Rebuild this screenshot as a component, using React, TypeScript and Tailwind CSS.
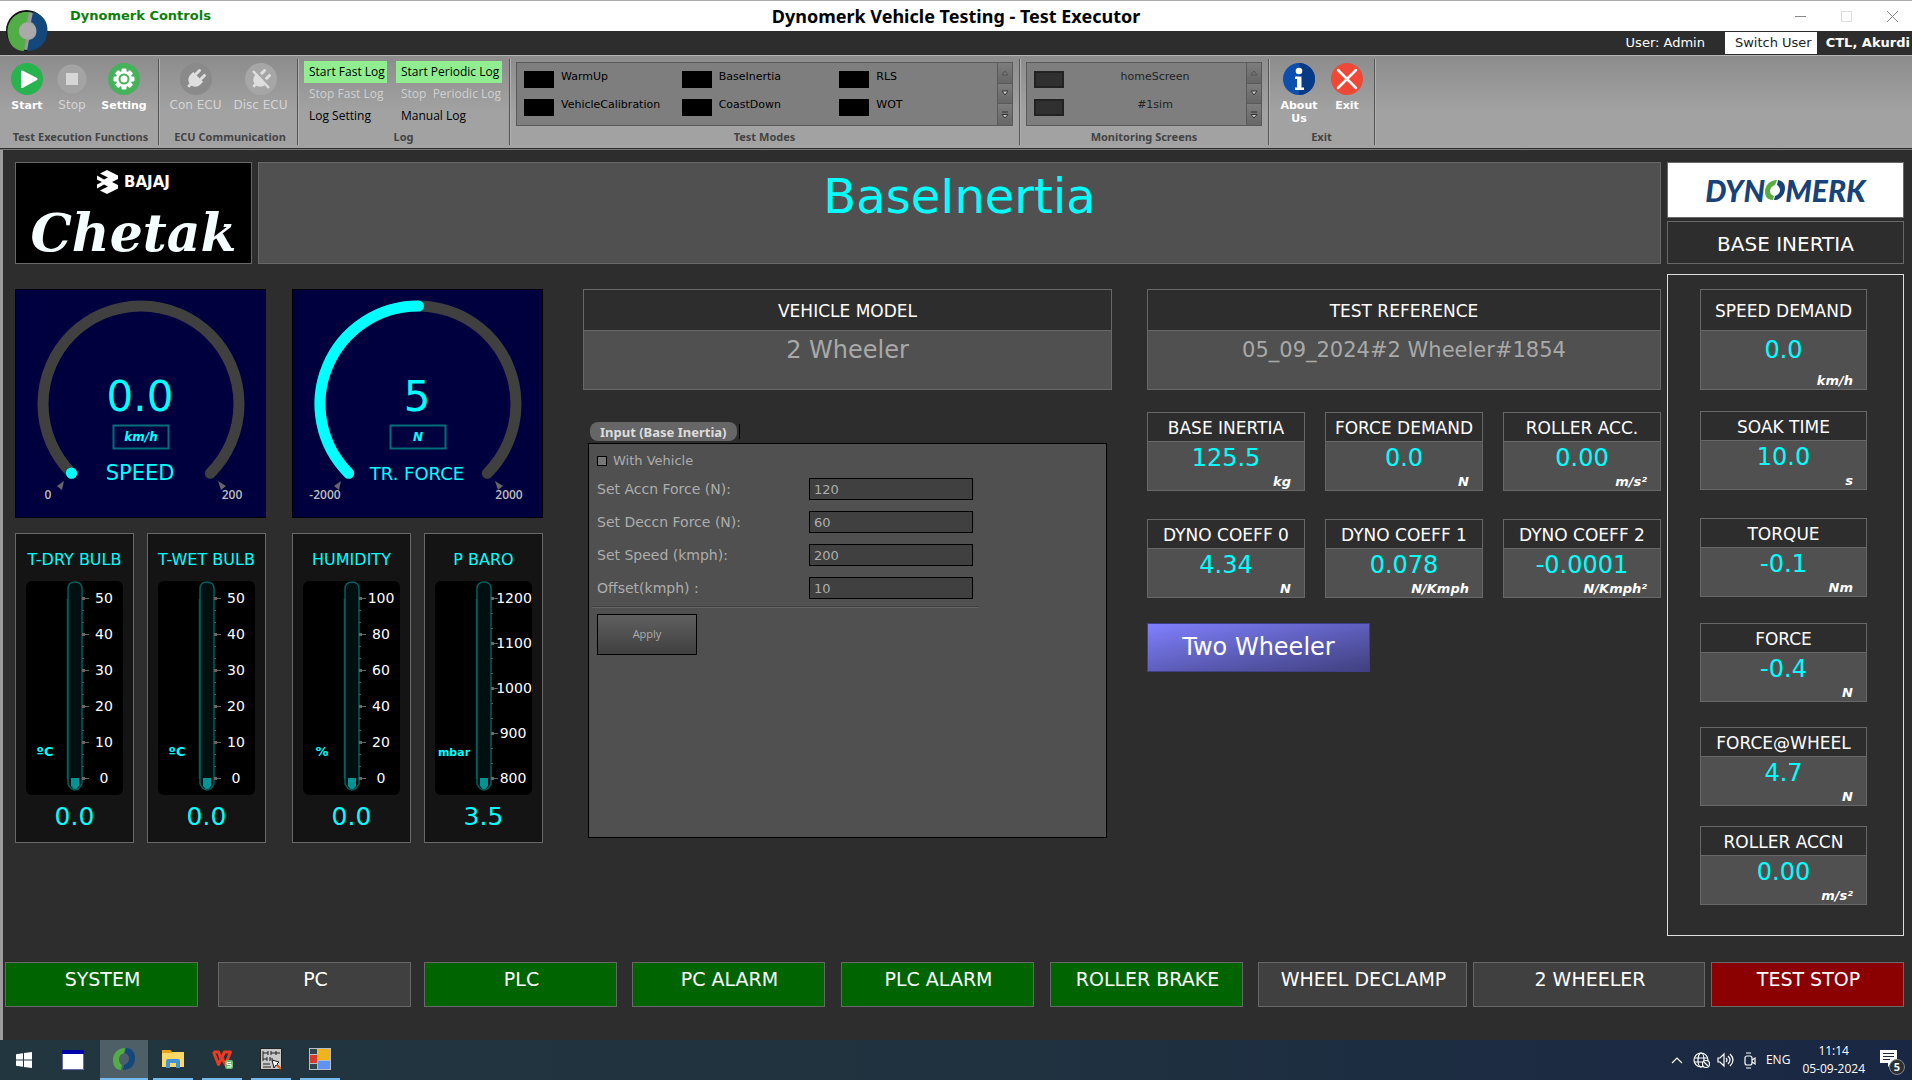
import React from "react";

const LINE = "border-[#686868]";

/* ---------- title bar and ribbon ---------- */

function BrandMark({ className }: { className?: string }) {
  return (
    <svg viewBox="0 0 42 42" className={className} aria-hidden="true">
      <circle cx="20.500" cy="20.500" r="20.500" fill="#111" />
      <circle cx="21" cy="21" r="19" fill="#9a9a9a" />
      <path d="M23 2 C10 1 1 10 1.500 23 C2 34 9 41 18 41 L20 29 C15 28 13 25 13 21 C13 16 16 13 21 12 Z" fill="#52ad47" />
      <path d="M27 2 C36 4 42 11 41.500 21 C41 33 33 41 21 41 L23 30 C28 29 30.500 26 30.500 21 C30.500 17 28 13 25 12 Z" fill="#14477c" />
      <circle cx="21.500" cy="21" r="8.500" fill="#aaaaaa" />
    </svg>
  );
}

function RibbonGroup({ label, className, children }: { label: string; className: string; children: React.ReactNode }) {
  return (
    <section className={`my-[3px] flex flex-col border-r border-[#555] shadow-[1px_0_0_#b0b0b0] ${className}`}>
      <div className="flex h-[71px] min-w-0">{children}</div>
      <h2 className="text-center font-['Noto_Sans',sans-serif] text-[11px] leading-4 font-bold text-[#444]">{label}</h2>
    </section>
  );
}

function RibbonButton({ label, className, muted, children }: { label: React.ReactNode; className?: string; muted?: boolean; children: React.ReactNode }) {
  return (
    <button
      className={`flex flex-col items-center gap-1 pt-1 leading-[13px] whitespace-nowrap ${muted ? "text-[12px] text-[#d4d4d4]" : "text-[11px] font-bold text-white"} ${className ?? ""}`}
    >
      <svg viewBox="0 0 32 32" className="h-8 w-8" aria-hidden="true">
        {children}
      </svg>
      <span>{label}</span>
    </button>
  );
}

const PLUG = (
  <g transform="rotate(45 16 16)" fill="#dedede">
    <path d="M9 13h14v4a7 7 0 0 1-14 0z" />
    <rect x="11" y="6" width="3" height="8" rx="1.500" />
    <rect x="18" y="6" width="3" height="8" rx="1.500" />
    <rect x="14.500" y="22" width="3" height="5" />
  </g>
);

function ScrollButtons({ name }: { name: string }) {
  return (
    <div className="grid w-[15px] shrink-0 grid-rows-3 border-l border-[#5a5a5a]">
      {["up", "down", "more"].map((kind) => (
        <button key={kind} aria-label={`${name} ${kind}`} className="flex items-center justify-center border-b border-[#5a5a5a] bg-gradient-to-b from-[#7d7d7d] to-[#666] last:border-b-0">
          <svg viewBox="0 0 8 8" className="h-2 w-2" aria-hidden="true">
            {kind === "up" && <path d="M1 6h6L4 2z" fill="#777" stroke="#555" />}
            {kind === "down" && <path d="M1 2h6L4 6z" fill="#ccc" stroke="#333" />}
            {kind === "more" && <path d="M1 1h6M1 3.500h6L4 7z" fill="#ccc" stroke="#333" />}
          </svg>
        </button>
      ))}
    </div>
  );
}

const LOG_FONT = "font-['Open_Sans',sans-serif] text-[12px] h-[22px] px-[5px] text-left whitespace-pre";

function Ribbon() {
  return (
    <div className="flex h-[93px] border-t border-[#b5b5b5] bg-gradient-to-b from-[#8c8c8c] to-[#a2a2a2] to-60% pl-[3px]">
      <RibbonGroup label="Test Execution Functions" className="w-[156px]">
        <RibbonButton label="Start" className="w-[48px]">
          <circle cx="16" cy="16" r="16" fill="#27b44f" />
          <path d="M11 8.500L25.500 16L11 24z" fill="#fff" stroke="#fff" strokeWidth="2" strokeLinejoin="round" />
        </RibbonButton>
        <RibbonButton label="Stop" muted className="w-[42px]">
          <circle cx="16" cy="16" r="14.500" fill="#a3a3a3" />
          <rect x="10" y="10" width="12" height="12" fill="#d6d6d6" />
        </RibbonButton>
        <RibbonButton label="Setting" className="w-[62px]">
          <circle cx="16" cy="16" r="16" fill="#44b35b" />
          {[0, 45, 90, 135].map((a) => (
            <rect key={a} x="13.500" y="5.500" width="5" height="21" rx="1" fill="#fff" transform={`rotate(${a} 16 16)`} />
          ))}
          <circle cx="16" cy="16" r="8" fill="#fff" />
          <circle cx="16" cy="16" r="4.500" fill="none" stroke="#44b35b" strokeWidth="2" />
        </RibbonButton>
      </RibbonGroup>
      <RibbonGroup label="ECU Communication" className="w-[139px] pl-1">
        <RibbonButton label="Con ECU" muted className="w-[65px]">
          <circle cx="16" cy="16" r="16" fill="#8a8a8a" />
          {PLUG}
        </RibbonButton>
        <RibbonButton label="Disc ECU" muted className="w-[65px]">
          <circle cx="16" cy="16" r="16" fill="#a6a6a6" />
          {PLUG}
          <path d="M10 7L26 24" stroke="#a6a6a6" strokeWidth="3" />
          <path d="M8 8L24 25" stroke="#dedede" strokeWidth="2.500" />
        </RibbonButton>
      </RibbonGroup>
      <RibbonGroup label="Log" className="w-[212px]">
        <div className="grid grid-cols-[83px_106px] content-start gap-x-[9px] pt-[2px] pl-[6px] text-black">
          <button className={`bg-[#90ee90] ${LOG_FONT}`}>Start Fast Log</button>
          <button className={`bg-[#90ee90] ${LOG_FONT}`}>Start Periodic Log</button>
          <button className={`text-[#d0d0d0] ${LOG_FONT}`}>Stop Fast Log</button>
          <button className={`text-[#d0d0d0] ${LOG_FONT}`}>Stop  Periodic Log</button>
          <button className={LOG_FONT}>Log Setting</button>
          <button className={LOG_FONT}>Manual Log</button>
        </div>
      </RibbonGroup>
      <RibbonGroup label="Test Modes" className="w-[510px]">
        <div className="mx-[6px] mt-[3px] flex h-16 flex-1 border border-[#5a5a5a] bg-[#7e7e7e]">
          <div className="grid flex-1 grid-cols-3 grid-rows-2 gap-y-[5px] py-[6px] pl-[7px] text-[11px] text-black">
            {["WarmUp", "BaseInertia", "RLS", "VehicleCalibration", "CoastDown", "WOT"].map((m) => (
              <button key={m} className="flex gap-[7px] text-left">
                <span className="mt-[2px] h-[17px] w-[30px] shrink-0 bg-black" />
                {m}
              </button>
            ))}
          </div>
          <ScrollButtons name="Test modes" />
        </div>
      </RibbonGroup>
      <RibbonGroup label="Monitoring Screens" className="w-[249px]">
        <div className="mx-[6px] mt-[3px] flex h-16 flex-1 border border-[#5a5a5a] bg-[#7e7e7e]">
          <div className="grid flex-1 grid-rows-2 gap-y-[5px] py-[6px] pl-[7px] text-[11px] text-[#222]">
            {["homeScreen", "#1sim"].map((m) => (
              <button key={m} className="flex">
                <span className="mt-[2px] h-[17px] w-[30px] shrink-0 border-2 border-[#222] bg-[#303030]" />
                <span className="flex-1 text-center">{m}</span>
              </button>
            ))}
          </div>
          <ScrollButtons name="Screens" />
        </div>
      </RibbonGroup>
      <RibbonGroup label="Exit" className="w-[106px] px-[4px]">
        <RibbonButton label={<>About<br />Us</>} className="w-[52px]">
          <circle cx="16" cy="16" r="16" fill="#0d4fae" />
          <path d="M16 0a16 16 0 0 1 0 32z" fill="#063a85" />
          <circle cx="16" cy="8" r="3.300" fill="#fff" />
          <path d="M12 13.500h6.500v11H21V27h-9v-2.500h2V16h-2z" fill="#fff" />
        </RibbonButton>
        <RibbonButton label="Exit" className="w-[44px]">
          <circle cx="16" cy="16" r="16" fill="#ef4836" />
          <path d="M7 7l18 18M25 7L7 25" stroke="#fff" strokeWidth="2.500" strokeLinecap="round" />
        </RibbonButton>
      </RibbonGroup>
    </div>
  );
}

function WindowHeader() {
  return (
    <header className="relative">
      <div className="grid h-[31px] grid-cols-[1fr_auto_1fr] items-center border-t border-[#aaa] bg-white">
        <span className="pl-[70px] text-[13px] leading-[18px] font-bold text-[#0a800a]">Dynomerk Controls</span>
        <h1 className="font-['Noto_Sans',sans-serif] text-[18px] leading-[26px] font-bold text-black">Dynomerk Vehicle Testing - Test Executor</h1>
        <div className="flex justify-end gap-[35px] pr-[14px]">
          {["M0 5.500H11", "M.5.500h10v10H.5z", "M0 0L11 11M11 0L0 11"].map((d, i) => (
            <button key={d} aria-label={["Minimize", "Maximize", "Close"][i]}>
              <svg viewBox="0 0 11 11" className="h-[11px] w-[11px]" aria-hidden="true">
                <path d={d} fill="none" stroke={i === 1 ? "#ddd" : "#888"} />
              </svg>
            </button>
          ))}
        </div>
      </div>
      <div className="flex h-6 items-center justify-end bg-[#2d2d2d] text-[13px] whitespace-nowrap text-white">
        <span>User: Admin</span>
        <button className="mr-[9px] ml-[20px] h-[22px] bg-white pr-[5px] pl-[10px] text-[#222]">Switch User</button>
        <span className="pr-[2px] font-bold">CTL, Akurdi</span>
      </div>
      <BrandMark className="absolute top-[10px] left-[6px] h-[42px] w-[42px]" />
    </header>
  );
}

/* ---------- instruments ---------- */

function Gauge({ value, unit, title, min, max, fill, titleSize }: { value: string; unit: string; title: string; min: string; max: string; fill: number; titleSize: number }) {
  const cx = 126;
  const cy = 115;
  const r = 98;
  const at = (f: number) => {
    const a = ((135 + 270 * f) * Math.PI) / 180;
    return `${(cx + r * Math.cos(a)).toFixed(1)} ${(cy + r * Math.sin(a)).toFixed(1)}`;
  };
  return (
    <div className="h-[229px] w-[251px] border border-black bg-[#00003f]">
      <svg viewBox="1 1 249 227" className="h-full w-full" role="img" aria-label={`${title} ${value} ${unit}`}>
        <path d={`M${at(0)} A${r} ${r} 0 1 1 ${at(1)}`} fill="none" stroke="#404040" strokeWidth="11" strokeLinecap="round" />
        <path d={`M${at(0)} A${r} ${r} 0 ${fill > 0.66 ? 1 : 0} 1 ${at(fill)}`} fill="none" stroke="#00ffff" strokeWidth="11" strokeLinecap="round" />
        <g fill="#00ffff" textAnchor="middle">
          <text x="125" y="122" fontSize="42">{value}</text>
          <text x="126" y="152" fontSize="12" fontWeight="bold" fontStyle="italic">{unit}</text>
          <text x="125" y="191" fontSize={titleSize}>{title}</text>
        </g>
        <rect x="98.500" y="136.500" width="55" height="23" fill="none" stroke="#006d78" strokeWidth="2" />
        <path d="M49 192l-7 5 5 4z" fill="#666" />
        <path d="M203 192l8 5-5 4z" fill="#666" />
        <g fill="#bdbdbd" fontSize="12" fontWeight="600" textAnchor="middle" fontFamily="Open Sans, sans-serif">
          <text x="33" y="210">{min}</text>
          <text x="217" y="210">{max}</text>
        </g>
      </svg>
    </div>
  );
}

function Thermometer({ title, unit, marks, value }: { title: string; unit: string; marks: string[]; value: string }) {
  const step = 180 / (marks.length - 1);
  return (
    <div className={`flex h-[310px] w-[119px] flex-col items-center border bg-[#141414] pt-[17px] text-[#00ffff] ${LINE}`}>
      <h3 className="text-[16px] leading-[18px] whitespace-nowrap">{title}</h3>
      <svg viewBox="0 0 97 214" className="mt-[12px] h-[214px] w-[97px]" role="img" aria-label={`${title} ${value} ${unit}`}>
        <rect width="97" height="214" rx="6" fill="#000" />
        <path d="M42 8q0-7 7-7t7 7v195q-3 6-7 6t-7-6z" fill="#000f0f" stroke="#005f5f" strokeWidth="1.500" />
        <path d="M41.500 18v180" stroke="#005f5f" strokeWidth="1.500" />
        <path d="M45 197h8v8l-2.500 3h-3l-2.500-3z" fill="#009494" />
        {marks.map((m, i) => (
          <g key={m}>
            <path d={`M56 ${17.5 + i * step}h7`} stroke="#666" />
            <path d={`M56 ${17.5 + i * step}h3`} stroke="#666" strokeWidth="3" />
            {i < marks.length - 1 && <path d={`M56 ${17.5 + (i + 1 / 3) * step}h2M56 ${17.5 + (i + 2 / 3) * step}h2`} stroke="#555" />}
            <text x={m.length > 3 ? 79 : 78} y={22 + i * step} fontSize="14" fill="#fff" textAnchor="middle">{m}</text>
          </g>
        ))}
        <text x={19} y="175" fontSize={unit.length > 2 ? 11 : 13} fontWeight="bold" fill="#00ffff" textAnchor="middle">{unit}</text>
      </svg>
      <output className="mt-[7px] text-[25px] leading-[30px]">{value}</output>
    </div>
  );
}

function Reading({ title, value, unit, tall, className }: { title: string; value: string; unit: string; tall?: boolean; className?: string }) {
  return (
    <div className={`flex flex-col border text-center whitespace-nowrap ${LINE} ${tall ? "h-[101px]" : "h-[79px]"} ${className ?? ""}`}>
      <h3 className={`flex items-center justify-center border-b pt-[3px] text-[17px] text-white ${LINE} ${tall ? "h-[41px]" : "h-[29px]"}`}>{title}</h3>
      <div className="flex flex-1 flex-col justify-between bg-[#505050] pb-[1px]">
        <output className={`text-[24px] leading-8 text-[#00ffff] ${tall ? "pt-[3px]" : ""}`}>{value}</output>
        <span className="pr-[13px] text-right text-[13px] leading-[15px] font-bold text-white italic">{unit}</span>
      </div>
    </div>
  );
}

function TextPanel({ title, text, size }: { title: string; text: string; size: string }) {
  return (
    <div className={`h-[101px] border text-center ${LINE}`}>
      <h3 className={`flex h-[41px] items-center justify-center border-b pt-[3px] text-[17px] text-white ${LINE}`}>{title}</h3>
      <p className={`h-[58px] bg-[#505050] pt-[3px] leading-8 text-[#a9a9a9] ${size}`}>{text}</p>
    </div>
  );
}

function InputForm() {
  const fields = [
    ["Set Accn Force (N):", "120"],
    ["Set Deccn Force (N):", "60"],
    ["Set Speed (kmph):", "200"],
    ["Offset(kmph) :", "10"],
  ];
  return (
    <div className="mt-8 mr-[5px] ml-[5px]">
      <div className="ml-[2px] flex h-[21px] gap-[2px] pb-[2px]">
        <button className="rounded-lg bg-[#666] px-[10px] font-['Noto_Sans',sans-serif] text-[13px] leading-[18px] font-bold text-[#ddd]">Input (Base Inertia)</button>
        <span className="my-[2px] w-px bg-black" />
      </div>
      <form className="h-[395px] border border-black bg-[#505050] px-[3px] pt-[8px] text-[14px] text-[#adadad]" onSubmit={(e) => e.preventDefault()}>
        <label className="ml-[5px] flex h-[18px] items-center gap-[6px] text-[13px]">
          <input type="checkbox" className="h-[10px] w-[10px] appearance-none border border-black bg-[#777]" />
          With Vehicle
        </label>
        <div className="mt-2 flex flex-col gap-[11px] px-[5px]">
          {fields.map(([label, value]) => (
            <label key={label} className="flex h-[22px] items-center">
              <span className="w-[212px]">{label}</span>
              <input defaultValue={value} className="h-[22px] w-[164px] border border-black bg-[#404040] px-1 text-[13px] outline-none" />
            </label>
          ))}
        </div>
        <hr className="mt-[7px] w-[386px] border-t border-b border-t-[#3c3c3c] border-b-[#666]" />
        <button className="mt-[6px] ml-[5px] block h-[41px] w-[100px] border border-black bg-gradient-to-b from-[#606060] to-[#404040] font-['Open_Sans',sans-serif] text-[11px]">Apply</button>
      </form>
    </div>
  );
}

function BajajLogo() {
  return (
    <div className={`flex w-[237px] shrink-0 flex-col items-center border bg-black text-white ${LINE}`}>
      <div className="mt-[7px] flex h-6 items-center gap-[5px]">
        <svg viewBox="0 0 22 24" className="h-6 w-[22px]" aria-hidden="true">
          <path d="M10 0L21 5.500V9L15 12l6 3v3.500L10 24 3 20.500 11 16.500 7 14.500 0 18.500V14.500L5 12 0 9.500V5.500l7 4 4-2L3 3.500z" fill="#fff" />
        </svg>
        <span className="text-[15px] font-bold">BAJAJ</span>
      </div>
      <span className="mt-[9px] font-['DejaVu_Serif',serif] text-[52px] leading-[60px] font-bold text-[#f4ffff] italic">Chetak</span>
    </div>
  );
}

function DynomerkLogo() {
  return (
    <div className={`flex h-[56px] items-center justify-center border bg-white font-['Lato',sans-serif] text-[30px] font-black text-[#184379] italic ${LINE}`}>
      DYN
      <svg viewBox="0 0 20 20" className="h-5 w-5" aria-hidden="true">
        <path d="M12 0C5 0 0 5 0 12c0 5 3 8 8 8l1-4c-3-1-4-3-4-5 0-3 2-5 5-6z" fill="#56ae42" />
        <path d="M13 0c5 1 7 4 7 8 0 7-5 12-11 12l1-4c3-1 5-3 5-6 0-2-1-4-3-5z" fill="#184379" />
      </svg>
      MERK
    </div>
  );
}

/* ---------- bottom bars ---------- */

function StatusBar() {
  const items = [
    ["SYSTEM", "w-[193px] mr-[20px] bg-[#006400]"],
    ["PC", "w-[193px] mr-[13px] bg-[#404040]"],
    ["PLC", "w-[193px] mr-[15px] bg-[#006400]"],
    ["PC ALARM", "w-[193px] mr-[16px] bg-[#006400]"],
    ["PLC ALARM", "w-[193px] mr-[16px] bg-[#006400]"],
    ["ROLLER BRAKE", "w-[193px] mr-[15px] bg-[#006400]"],
    ["WHEEL DECLAMP", "w-[209px] mr-[6px] bg-[#404040]"],
    ["2 WHEELER", "w-[232px] mr-[6px] bg-[#404040]"],
    ["TEST STOP", "w-[193px] bg-[#8b0000]"],
  ];
  return (
    <div className="mt-[26px] mb-[33px] flex pr-[8px] pl-[2px]">
      {items.map(([label, cls]) => (
        <button key={label} className={`h-[45px] border pb-[10px] pl-[2px] text-[19px] whitespace-nowrap text-white ${LINE} ${cls}`}>
          {label}
        </button>
      ))}
    </div>
  );
}

function Taskbar() {
  const slot = "flex h-10 w-10 items-center justify-center";
  return (
    <footer className="flex h-10 justify-between bg-gradient-to-r from-[#22363f] via-[#20323f] to-[#1a2744] font-['Open_Sans',sans-serif] text-[12px] text-white">
      <nav className="flex items-start gap-[9px] pl-1">
        <button aria-label="Start menu" className={slot}>
          <svg viewBox="0 0 16 16" className="h-4 w-4"><path d="M0 2.300L7 1.200V7.500H0zM8 1.100L16 0V7.500H8zM0 8.500H7V14.800L0 13.800zM8 8.500H16V16L8 14.900z" fill="#fff" /></svg>
        </button>
        <button aria-label="Window" className={slot}>
          <svg viewBox="0 0 22 20" className="h-5 w-[22px]"><rect x=".5" y=".5" width="21" height="19" fill="#fff" stroke="#6a6ab0" /><rect width="22" height="4" fill="#0000a8" /></svg>
        </button>
        <button aria-label="Dynomerk" className="-ml-[2px] flex h-10 w-12 items-center justify-center border-b-2 border-[#76b9ed] bg-[#4e5f68]">
          <svg viewBox="0 0 22 22" className="h-[22px] w-[22px]">
            <path d="M12 0C5 0 0 5 0 12c0 6 3 10 8 10l1-5c-2-1-3-3-3-6 0-3 2-5 5-6z" fill="#52ad47" />
            <path d="M13 0c6 0 9 4 9 10 0 7-4 12-12 12l1-5c3-1 5-3 5-6s-1-5-4-6z" fill="#14477c" />
          </svg>
        </button>
        <button aria-label="File explorer" className={`-ml-1 border-b-2 border-[#76b9ed] ${slot}`}>
          <svg viewBox="0 0 22 20" className="h-5 w-[22px]"><path d="M0 1h8l2 2h12v15H0z" fill="#ffd767" /><path d="M0 1h8l2 3H0z" fill="#e8a317" /><path d="M4 19v-7q0-2 2-2h10q2 0 2 2v7h-4v-5H8v5z" fill="#3f94d8" /></svg>
        </button>
        <button aria-label="WPS Office" className={`border-b-2 border-[#76b9ed] ${slot}`}>
          <svg viewBox="0 0 22 20" className="h-5 w-[22px]"><path d="M2.500 3h5L10 10M2.500 3l5 12.500 6-12.500h6l-5 12.500L10.500 8" fill="none" stroke="#ee3a22" strokeWidth="3" strokeLinejoin="round" /><rect x="14" y="11" width="8" height="9" rx="2" fill="#6cc070" /><path d="M20 13.500h-4v2h4v2.500h-4" fill="none" stroke="#fff" /></svg>
        </button>
        <button aria-label="Ladder editor" className={`border-b-2 border-[#76b9ed] ${slot}`}>
          <svg viewBox="0 0 22 22" className="h-[22px] w-[22px]"><rect x=".5" y=".5" width="21" height="21" fill="#c8c8c8" stroke="#222" /><path d="M3 3v10M3 5h5M8 3v4M11 3v4M11 5h5M16 3v4M16 5h4M3 11h4M7 9v4M10 9v4M10 11h3M3 16h7M3 19h8" stroke="#222" fill="none" /><path d="M12 12l2 8 2-3 4 3-3-4 2-2z" fill="#fff" stroke="#111" /><path d="M17 17l4 4" stroke="#e35c1c" strokeWidth="2" /></svg>
        </button>
        <button aria-label="Designer" className={`border-b-2 border-[#76b9ed] ${slot}`}>
          <svg viewBox="0 0 22 22" className="h-[22px] w-[22px]"><rect width="22" height="22" fill="#b8bec2" /><rect x="1" y="1" width="7" height="5" fill="#30474f" /><rect x="1" y="7" width="7" height="8" fill="#d83a2b" /><rect x="9" y="1" width="12" height="11" fill="#efb31c" /><rect x="9" y="13" width="12" height="8" fill="#5f93f0" /><rect x="1" y="16" width="7" height="5" fill="#30474f" /></svg>
        </button>
      </nav>
      <div className="flex items-center pr-[7px]">
        <svg viewBox="0 0 90 20" className="h-5 w-[90px]" fill="none" stroke="#fff" strokeWidth="1.200" aria-hidden="true">
          <path d="M2 13l5-5 5 5" />
          <circle cx="31" cy="10" r="7" /><ellipse cx="31" cy="10" rx="3" ry="7" /><path d="M24 8h14M24 12h10" /><circle cx="36" cy="14" r="3.500" fill="#1b2942" /><path d="M34 12l4 4" />
          <path d="M48 8v4h2l4 4V4l-4 4zM56 8q2 2 0 4M58 6q4 4 0 8M60 4q6 6 0 12" />
          <rect x="75" y="6" width="7" height="9" rx="2" /><path d="M82 10l3-2v6l-3-2M76 3h5M76 18h5" />
        </svg>
        <span className="ml-[6px]">ENG</span>
        <time className="mr-[14px] ml-3 text-center text-[12px] leading-[18px]">11:14<br />05-09-2024</time>
        <button aria-label="Notifications, 5 new" className="relative">
          <svg viewBox="0 0 26 26" className="h-[26px] w-[26px]" aria-hidden="true">
            <path d="M1 3h17v13h-5l-4 4v-4H1z" fill="#fff" /><path d="M4 6.500h11M4 9.500h11M4 12.500h7" stroke="#1b2942" />
          </svg>
          <span className="absolute right-0 -bottom-[2px] h-4 w-4 rounded-full border border-[#888] bg-[#2c2f36] text-[11px] leading-[14px] font-bold">5</span>
        </button>
      </div>
    </footer>
  );
}

export default function App() {
  return (
    <div className="flex min-h-screen flex-col bg-[#2d2d2d] font-['DejaVu_Sans',sans-serif]">
      <WindowHeader />
      <Ribbon />
      <div className="h-[2px] border-t border-[#2d2d2d] bg-[#777]" />
      <div className="flex flex-1 flex-col border-l-[3px] border-[#9c9c9c]">
        <main className="flex gap-[6px] pt-3 pr-2 pl-3">
          <div className="min-w-0 flex-1">
            <div className="flex h-[102px] gap-[6px]">
              <BajajLogo />
              <h2 className={`flex-1 border bg-[#505050] text-center text-[48px] leading-[66px] text-[#00ffff] ${LINE}`}>BaseInertia</h2>
            </div>
            <div className="mt-[25px] flex">
              <div className="mr-10 grid shrink-0 grid-cols-2 gap-x-[26px] gap-y-[15px]">
                <Gauge value="0.0" unit="km/h" title="SPEED" min="0" max="200" fill={0.001} titleSize={21} />
                <Gauge value="5" unit="N" title="TR. FORCE" min="-2000" max="2000" fill={0.501} titleSize={18} />
                <div className="flex justify-between">
                  <Thermometer title="T-DRY BULB" unit="ºC" marks={["50", "40", "30", "20", "10", "0"]} value="0.0" />
                  <Thermometer title="T-WET BULB" unit="ºC" marks={["50", "40", "30", "20", "10", "0"]} value="0.0" />
                </div>
                <div className="flex justify-between">
                  <Thermometer title="HUMIDITY" unit="%" marks={["100", "80", "60", "40", "20", "0"]} value="0.0" />
                  <Thermometer title="P BARO" unit="mbar" marks={["1200", "1100", "1000", "900", "800"]} value="3.5" />
                </div>
              </div>
              <div className="grid flex-1 grid-cols-[530fr_515fr] gap-[35px]">
                <div>
                  <TextPanel title="VEHICLE MODEL" text="2 Wheeler" size="text-[24px]" />
                  <InputForm />
                </div>
                <div>
                  <TextPanel title="TEST REFERENCE" text="05_09_2024#2 Wheeler#1854" size="text-[21px]" />
                  <div className="mt-[22px] grid grid-cols-3 gap-x-5 gap-y-7">
                    <Reading title="BASE INERTIA" value="125.5" unit="kg" />
                    <Reading title="FORCE DEMAND" value="0.0" unit="N" />
                    <Reading title="ROLLER ACC." value="0.00" unit="m/s²" />
                    <Reading title="DYNO COEFF 0" value="4.34" unit="N" />
                    <Reading title="DYNO COEFF 1" value="0.078" unit="N/Kmph" />
                    <Reading title="DYNO COEFF 2" value="-0.0001" unit="N/Kmph²" />
                  </div>
                  <button className="mt-[25px] h-[49px] w-[223px] border border-[#40408a] bg-gradient-to-br from-[#8080ff] to-[#404080] pb-[1px] text-[24px] text-white">Two Wheeler</button>
                </div>
              </div>
            </div>
          </div>
          <aside className="w-[237px] shrink-0">
            <DynomerkLogo />
            <h2 className={`mt-[3px] flex h-[43px] items-center justify-center border pt-[2px] text-[20px] text-white ${LINE}`}>BASE INERTIA</h2>
            <div className="mt-[10px] flex h-[662px] flex-col border border-[#ddd] pt-[14px] pr-9 pl-8">
              <Reading tall title="SPEED DEMAND" value="0.0" unit="km/h" className="mb-[21px]" />
              <Reading title="SOAK TIME" value="10.0" unit="s" className="mb-[28px]" />
              <Reading title="TORQUE" value="-0.1" unit="Nm" className="mb-[26px]" />
              <Reading title="FORCE" value="-0.4" unit="N" className="mb-[25px]" />
              <Reading title="FORCE@WHEEL" value="4.7" unit="N" className="mb-[20px]" />
              <Reading title="ROLLER ACCN" value="0.00" unit="m/s²" />
            </div>
          </aside>
        </main>
        <StatusBar />
      </div>
      <Taskbar />
    </div>
  );
}
